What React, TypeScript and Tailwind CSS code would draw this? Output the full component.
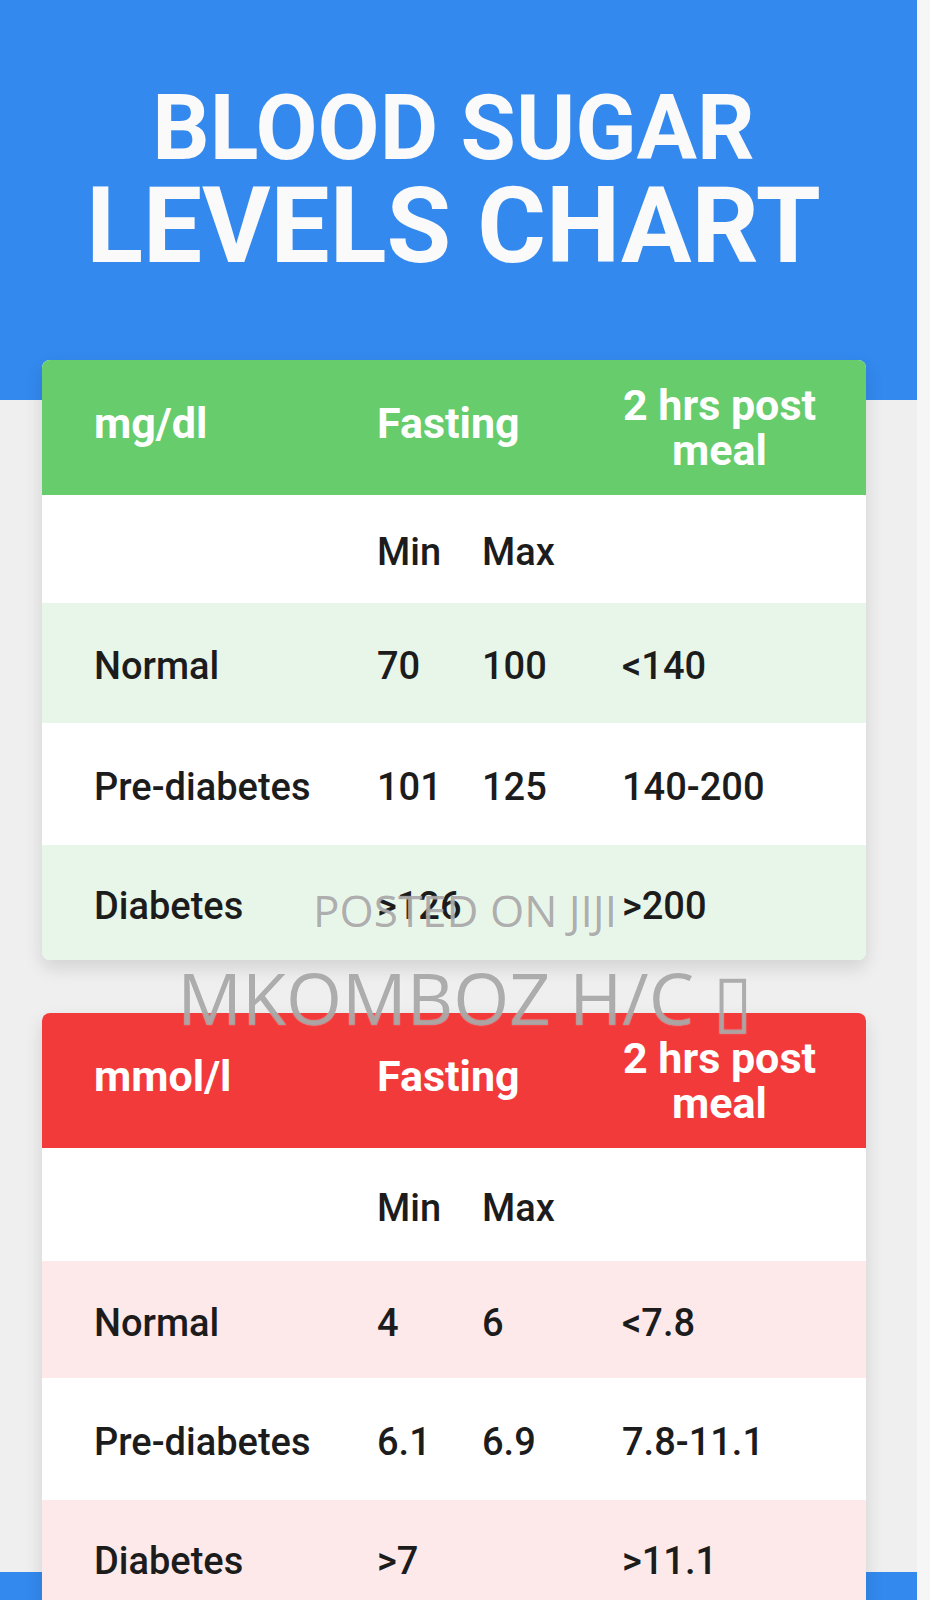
import React from "react";

type RowData = { label: string; min: string; max: string; post: string; bg: string; h: string };

const mgRows: RowData[] = [
  { label: "Normal", min: "70", max: "100", post: "<140", bg: "bg-[#e8f6e9]", h: "h-[120px]" },
  { label: "Pre-diabetes", min: "101", max: "125", post: "140-200", bg: "bg-white", h: "h-[122px]" },
  { label: "Diabetes", min: ">126", max: "", post: ">200", bg: "bg-[#e8f6e9]", h: "h-[115px]" },
];

const mmolRows: RowData[] = [
  { label: "Normal", min: "4", max: "6", post: "<7.8", bg: "bg-[#fde9ea]", h: "h-[117px]" },
  { label: "Pre-diabetes", min: "6.1", max: "6.9", post: "7.8-11.1", bg: "bg-white", h: "h-[122px]" },
  { label: "Diabetes", min: ">7", max: "", post: ">11.1", bg: "bg-[#fde9ea]", h: "h-[115px]" },
];

const Row = ({ label, min, max, post, bg, h }: RowData) => (
  <div className={`flex items-center pl-[52px] pt-[6px] text-[38px] font-medium leading-none text-[#1c1c1c] ${bg} ${h}`}>
    <span className="w-[283px]">{label}</span>
    <span className="w-[105px]">{min}</span>
    <span className="w-[140px]">{max}</span>
    <span>{post}</span>
  </div>
);

const Table = ({ unit, head, rows, minMaxH }: { unit: string; head: string; rows: RowData[]; minMaxH: string }) => (
  <div className="overflow-hidden rounded-[8px] bg-white shadow-[0_8px_18px_rgba(0,0,0,0.12)]">
    <div className={`flex h-[135px] items-center pl-[52px] text-[43px] font-bold leading-none text-white ${head}`}>
      <span className="w-[283px] pb-[8px]">{unit}</span>
      <span className="w-[245px] pb-[8px]">Fasting</span>
      <span className="w-[195px] text-center leading-[45px]">
        2 hrs post
        <br />
        meal
      </span>
    </div>
    <div className={`flex items-center bg-white pl-[52px] pt-[6px] text-[38px] font-medium leading-none text-[#1c1c1c] ${minMaxH}`}>
      <span className="w-[283px]" />
      <span className="w-[105px]">Min</span>
      <span className="w-[140px]">Max</span>
    </div>
    {rows.map((r) => (
      <Row key={r.label} {...r} />
    ))}
  </div>
);

export default function App() {
  return (
    <div className="relative h-[1600px] w-[930px] overflow-hidden bg-[#f6f6f7] font-['Roboto',sans-serif]">
      <div className="flex min-h-full w-[917px] flex-col bg-[#efeff0]">
        <header className="h-[400px] shrink-0 bg-[#3389ee] pr-[10px] pt-[84px] text-center font-bold leading-none text-[#fafafa]">
          <div className="text-[90px]">BLOOD SUGAR</div>
          <div className="text-[105px]">LEVELS CHART</div>
        </header>

        <div className="relative z-10 -mt-10 ml-[42px] flex w-[824px] shrink-0 flex-col gap-[53px]">
          <Table unit="mg/dl" head="bg-[#66cc6c]" rows={mgRows} minMaxH="h-[108px]" />
          <Table unit="mmol/l" head="bg-[#f23a3b]" rows={mmolRows} minMaxH="h-[113px]" />
        </div>

        <div className="-mt-[43px] h-[120px] shrink-0 bg-[#3389ee]" />
      </div>

      {/* watermark */}
      <div className="pointer-events-none absolute left-0 right-0 top-[888px] z-20 text-center font-['Open_Sans',sans-serif] leading-none text-[rgba(105,105,105,0.55)] [text-shadow:0_0_1px_rgba(255,255,255,0.9)]">
        <div className="text-[44px]">POSTED ON JIJI</div>
        <div className="mt-[29px] text-[72px]">MKOMBOZ H/C ▯</div>
      </div>
    </div>
  );
}
